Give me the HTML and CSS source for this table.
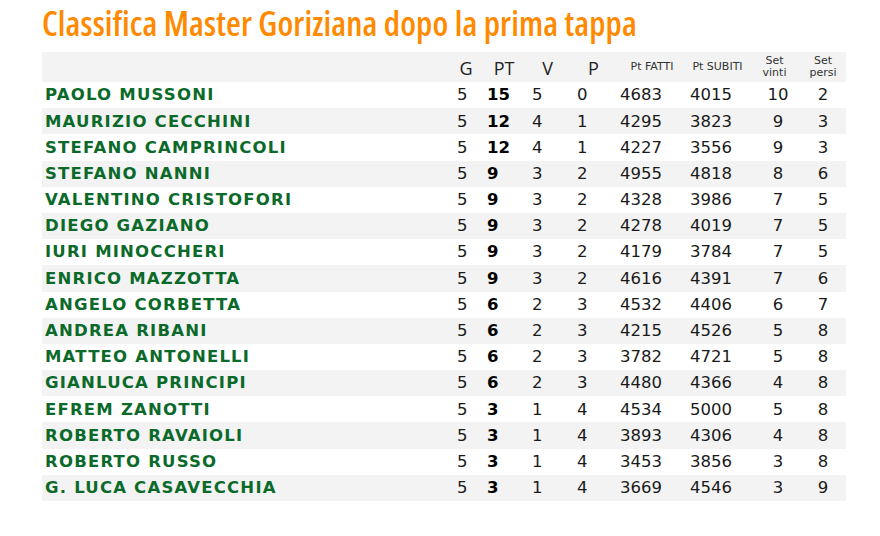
FILE: index.html
```html
<!DOCTYPE html>
<html lang="it">
<head>
<meta charset="utf-8">
<title>Classifica Master Goriziana</title>
<link rel="stylesheet" href="styles.css">
</head>
<body>
<div class="page">
  <h1 class="title">Classifica Master Goriziana dopo la prima tappa</h1>
  <div class="table">
    <div class="row head">
      <div class="c name"></div>
      <div class="c h big">G</div>
      <div class="c h big">PT</div>
      <div class="c h big">V</div>
      <div class="c h big">P</div>
      <div class="c h small">Pt FATTI</div>
      <div class="c h small">Pt SUBITI</div>
      <div class="c h small">Set<br>vinti</div>
      <div class="c h small">Set<br>persi</div>
    </div>
    <div class="row"><div class="c name">PAOLO MUSSONI</div><div class="c g">5</div><div class="c pt">15</div><div class="c v">5</div><div class="c p">0</div><div class="c f">4683</div><div class="c s">4015</div><div class="c sv">10</div><div class="c sp">2</div></div>
    <div class="row alt"><div class="c name">MAURIZIO CECCHINI</div><div class="c g">5</div><div class="c pt">12</div><div class="c v">4</div><div class="c p">1</div><div class="c f">4295</div><div class="c s">3823</div><div class="c sv">9</div><div class="c sp">3</div></div>
    <div class="row"><div class="c name">STEFANO CAMPRINCOLI</div><div class="c g">5</div><div class="c pt">12</div><div class="c v">4</div><div class="c p">1</div><div class="c f">4227</div><div class="c s">3556</div><div class="c sv">9</div><div class="c sp">3</div></div>
    <div class="row alt"><div class="c name">STEFANO NANNI</div><div class="c g">5</div><div class="c pt">9</div><div class="c v">3</div><div class="c p">2</div><div class="c f">4955</div><div class="c s">4818</div><div class="c sv">8</div><div class="c sp">6</div></div>
    <div class="row"><div class="c name">VALENTINO CRISTOFORI</div><div class="c g">5</div><div class="c pt">9</div><div class="c v">3</div><div class="c p">2</div><div class="c f">4328</div><div class="c s">3986</div><div class="c sv">7</div><div class="c sp">5</div></div>
    <div class="row alt"><div class="c name">DIEGO GAZIANO</div><div class="c g">5</div><div class="c pt">9</div><div class="c v">3</div><div class="c p">2</div><div class="c f">4278</div><div class="c s">4019</div><div class="c sv">7</div><div class="c sp">5</div></div>
    <div class="row"><div class="c name">IURI MINOCCHERI</div><div class="c g">5</div><div class="c pt">9</div><div class="c v">3</div><div class="c p">2</div><div class="c f">4179</div><div class="c s">3784</div><div class="c sv">7</div><div class="c sp">5</div></div>
    <div class="row alt"><div class="c name">ENRICO MAZZOTTA</div><div class="c g">5</div><div class="c pt">9</div><div class="c v">3</div><div class="c p">2</div><div class="c f">4616</div><div class="c s">4391</div><div class="c sv">7</div><div class="c sp">6</div></div>
    <div class="row"><div class="c name">ANGELO CORBETTA</div><div class="c g">5</div><div class="c pt">6</div><div class="c v">2</div><div class="c p">3</div><div class="c f">4532</div><div class="c s">4406</div><div class="c sv">6</div><div class="c sp">7</div></div>
    <div class="row alt"><div class="c name">ANDREA RIBANI</div><div class="c g">5</div><div class="c pt">6</div><div class="c v">2</div><div class="c p">3</div><div class="c f">4215</div><div class="c s">4526</div><div class="c sv">5</div><div class="c sp">8</div></div>
    <div class="row"><div class="c name">MATTEO ANTONELLI</div><div class="c g">5</div><div class="c pt">6</div><div class="c v">2</div><div class="c p">3</div><div class="c f">3782</div><div class="c s">4721</div><div class="c sv">5</div><div class="c sp">8</div></div>
    <div class="row alt"><div class="c name">GIANLUCA PRINCIPI</div><div class="c g">5</div><div class="c pt">6</div><div class="c v">2</div><div class="c p">3</div><div class="c f">4480</div><div class="c s">4366</div><div class="c sv">4</div><div class="c sp">8</div></div>
    <div class="row"><div class="c name">EFREM ZANOTTI</div><div class="c g">5</div><div class="c pt">3</div><div class="c v">1</div><div class="c p">4</div><div class="c f">4534</div><div class="c s">5000</div><div class="c sv">5</div><div class="c sp">8</div></div>
    <div class="row alt"><div class="c name">ROBERTO RAVAIOLI</div><div class="c g">5</div><div class="c pt">3</div><div class="c v">1</div><div class="c p">4</div><div class="c f">3893</div><div class="c s">4306</div><div class="c sv">4</div><div class="c sp">8</div></div>
    <div class="row"><div class="c name">ROBERTO RUSSO</div><div class="c g">5</div><div class="c pt">3</div><div class="c v">1</div><div class="c p">4</div><div class="c f">3453</div><div class="c s">3856</div><div class="c sv">3</div><div class="c sp">8</div></div>
    <div class="row alt"><div class="c name">G. LUCA CASAVECCHIA</div><div class="c g">5</div><div class="c pt">3</div><div class="c v">1</div><div class="c p">4</div><div class="c f">3669</div><div class="c s">4546</div><div class="c sv">3</div><div class="c sp">9</div></div>
  </div>
</div>
</body>
</html>
```
FILE: styles.css
```css
html, body {
  margin: 0;
  padding: 0;
  background: #ffffff;
}
.page {
  padding: 3px 0 0 42px;
  width: 804px;
}
.title {
  margin: 0 0 9px 0;
  font-family: "Open Sans", sans-serif;
  font-weight: 600;
  font-stretch: 75%;
  font-size: 34px;
  line-height: 40px;
  color: #ff8a00;
  letter-spacing: 0.1px;
  white-space: nowrap;
}
.table {
  display: flex;
  flex-direction: column;
}
.row {
  display: grid;
  grid-template-columns: 408px 32px 44px 43px 49px 68px 63px 51px 46px;
  height: 26.2px;
  align-items: center;
  font-family: "DejaVu Sans", Verdana, sans-serif;
  font-size: 16.5px;
  color: #1a1a1a;
  background: #ffffff;
}
.row.alt, .row.head {
  background: #f3f3f3;
}
.row.head {
  height: 30px;
}
.c {
  white-space: nowrap;
  line-height: 1;
}
.name {
  padding-left: 3px;
  padding-top: 1px;
  font-weight: bold;
  color: #0b6a2a;
  font-size: 16.5px;
  letter-spacing: 1.2px;
}
.h {
  text-align: center;
  color: #222;
  font-family: "Open Sans", sans-serif;
}
.h.big {
  font-size: 18px;
  padding-top: 2px;
}
.h.small {
  font-size: 11px;
  line-height: 12px;
  font-family: "DejaVu Sans", sans-serif;
  color: #333;
}
.g, .pt, .v, .p, .f, .s, .sv, .sp { padding-top: 1px; }
.g { padding-left: 7px; }
.pt { padding-left: 5px; font-weight: bold; color: #000; }
.v { padding-left: 6px; }
.p { padding-left: 8px; }
.f { padding-left: 2px; }
.s { padding-left: 4px; }
.sv { text-align: center; padding-left: 7px; }
.sp { text-align: center; }
```
